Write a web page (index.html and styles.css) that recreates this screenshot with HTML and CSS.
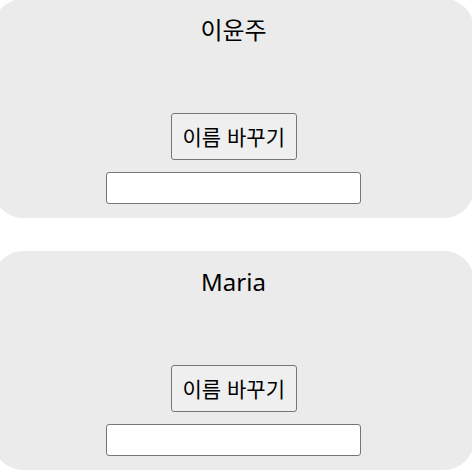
FILE: index.html
```html
<!DOCTYPE html>
<html lang="ko">
<head>
<meta charset="utf-8">
<link rel="stylesheet" href="styles.css">
</head>
<body>
<div class="list">
  <div class="card">
    <div class="name">이윤주</div>
    <button class="btn">이름 바꾸기</button>
    <input class="field" type="text">
  </div>
  <div class="card">
    <div class="name">Maria</div>
    <button class="btn">이름 바꾸기</button>
    <input class="field" type="text">
  </div>
</div>
</body>
</html>
```
FILE: styles.css
```css
html, body {
  margin: 0;
  padding: 0;
  background: #fff;
  overflow: hidden;
}
body {
  font-family: "Noto Sans", "Noto Sans CJK KR", sans-serif;
  color: #000;
}
.list {
  display: flex;
  flex-direction: column;
  gap: 33px;
  margin-top: -1px;
}
.card {
  box-sizing: border-box;
  width: 481px;
  height: 219px;
  margin-left: -7px;
  background: #ebebeb;
  border-radius: 30px;
  display: flex;
  flex-direction: column;
  align-items: center;
  padding: 14px 0 14px;
}
.name {
  font-size: 24px;
  line-height: 34px;
}
.btn {
  margin-top: auto;
  font-family: "Noto Sans CJK KR", sans-serif;
  font-size: 21px;
  line-height: 29px;
  color: #000;
  background: #efefef;
  border: 1px solid #767676;
  border-radius: 3px;
  padding: 8px 11px;
  width: 126px;
  height: 47px;
  box-sizing: border-box;
  white-space: nowrap;
}
.field {
  margin-top: 12px;
  width: 255px;
  height: 32px;
  box-sizing: border-box;
  border: 1px solid #767676;
  border-radius: 3px;
  background: #fff;
  padding: 0 4px;
}
```
